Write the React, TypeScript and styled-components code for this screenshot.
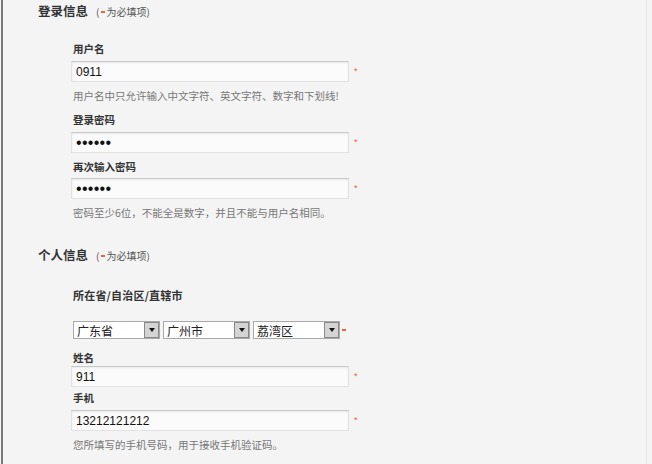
import React from "react";
import styled, { createGlobalStyle } from "styled-components";

const Global = createGlobalStyle`
  html, body { margin: 0; padding: 0; background: #f4f4f4; }
  body { font-family: "Liberation Sans", "Noto Sans CJK SC", sans-serif; color: #333; }
`;

const Page = styled.div`
  width: 646px;
  height: 464px;
  margin-left: 1px;
  border-left: 2px solid #7a7a7a;
  border-right: 1px solid #e6e6e6;
  background: #f4f4f4;
  padding-top: 2px;
  box-sizing: border-box;
  overflow: hidden;
`;

const SectionHead = styled.div<{ $mt?: number }>`
  display: flex;
  align-items: baseline;
  gap: 8px;
  padding-left: 35px;
  margin-top: ${(p) => p.$mt ?? 0}px;
  height: 18px;
  line-height: 18px;
`;

const HeadTitle = styled.span`
  font-family: "Noto Sans CJK SC", sans-serif;
  font-weight: 700;
  font-size: 12.5px;
  color: #333;
`;

const Note = styled.span`
  font-family: "Noto Sans CJK SC", sans-serif;
  font-size: 10px;
  color: #555;
  display: inline-flex;
  align-items: center;
`;

const Dash = styled.span`
  display: inline-block;
  width: 4px;
  height: 2px;
  background: #e8643c;
  margin: 0 1px 0 2px;
`;

const Body = styled.div`
  padding-left: 68px;
`;

const Label = styled.div<{ $mt?: number; $mb?: number }>`
  font-family: "Noto Sans CJK SC", sans-serif;
  font-weight: 700;
  font-size: 10.5px;
  line-height: 14px;
  color: #333;
  padding-left: 2px;
  margin-top: ${(p) => p.$mt ?? 0}px;
  margin-bottom: ${(p) => p.$mb ?? 0}px;
`;

const WideLabel = styled(Label)`
  font-size: 11px;
  letter-spacing: 0.2px;
`;

const Hint = styled.div<{ $mt?: number }>`
  font-family: "Noto Sans CJK SC", sans-serif;
  font-size: 10.5px;
  line-height: 14px;
  color: #777;
  padding-left: 2px;
  margin-top: ${(p) => p.$mt ?? 0}px;
`;

const Row = styled.div`
  display: flex;
  align-items: center;
  gap: 4px;
`;

const TextInput = styled.input<{ $pw?: boolean }>`
  width: 278px;
  height: 21px;
  box-sizing: border-box;
  border: 1px solid #e2e2e2;
  border-top-color: #c9c9c9;
  box-shadow: inset 0 1px 2px rgba(0, 0, 0, 0.08);
  background: #fbfbfb;
  padding: 0 4px;
  font-family: "Liberation Sans", Arial, sans-serif;
  font-size: ${(p) => (p.$pw ? "16px" : "12px")};
  letter-spacing: ${(p) => (p.$pw ? "0.3px" : "0")};
  color: #111;
  outline: none;
`;

const Star = styled.span`
  color: #e8643c;
  font-family: "Liberation Sans", sans-serif;
  font-size: 9px;
  line-height: 1;
  margin-left: 1px;
`;

const SelectRow = styled.div`
  display: flex;
  align-items: center;
  gap: 3px;
  padding-left: 2px;
  margin-top: 19px;
`;

const SelectBox = styled.div`
  width: 87px;
  height: 18px;
  box-sizing: border-box;
  border: 1px solid #a9a9a9;
  background: #fff;
  display: flex;
  align-items: center;
  justify-content: space-between;
  font-family: "Noto Sans CJK SC", sans-serif;
  font-size: 12px;
  color: #222;
  padding-left: 3px;
`;

const Arrow = styled.div`
  width: 15px;
  height: 16px;
  box-sizing: border-box;
  border: 1px solid #8a8a8a;
  background: #d4d4d4;
  display: flex;
  align-items: center;
  justify-content: center;
`;

const Tri = styled.span`
  width: 0;
  height: 0;
  border-left: 3.5px solid transparent;
  border-right: 3.5px solid transparent;
  border-top: 4px solid #111;
`;

const SelDash = styled.span`
  display: inline-block;
  width: 4px;
  height: 2px;
  background: #e8643c;
  margin-left: -1px;
`;

function Field({ value, pw = false }: { value: string; pw?: boolean }) {
  return (
    <Row>
      <TextInput $pw={pw} type={pw ? "password" : "text"} defaultValue={value} readOnly />
      <Star>*</Star>
    </Row>
  );
}

function Select({ text }: { text: string }) {
  return (
    <SelectBox>
      <span>{text}</span>
      <Arrow>
        <Tri />
      </Arrow>
    </SelectBox>
  );
}

function Required() {
  return (
    <Note>
      (<Dash />为必填项)
    </Note>
  );
}

export default function App() {
  return (
    <>
      <Global />
      <Page>
        <SectionHead>
          <HeadTitle>登录信息</HeadTitle>
          <Required />
        </SectionHead>
        <Body>
          <Label $mt={22} $mb={5}>用户名</Label>
          <Field value="0911" />
          <Hint $mt={7}>用户名中只允许输入中文字符、英文字符、数字和下划线!</Hint>
          <Label $mt={10} $mb={5}>登录密码</Label>
          <Field value="123456" pw />
          <Label $mt={7} $mb={4}>再次输入密码</Label>
          <Field value="123456" pw />
          <Hint $mt={7}>密码至少6位，不能全是数字，并且不能与用户名相同。</Hint>
        </Body>
        <SectionHead $mt={26}>
          <HeadTitle>个人信息</HeadTitle>
          <Required />
        </SectionHead>
        <Body>
          <WideLabel $mt={24}>所在省/自治区/直辖市</WideLabel>
          <SelectRow>
            <Select text="广东省" />
            <Select text="广州市" />
            <Select text="荔湾区" />
            <SelDash />
          </SelectRow>
          <Label $mt={12} $mb={1}>姓名</Label>
          <Field value="911" />
          <Label $mt={4} $mb={5}>手机</Label>
          <Field value="13212121212" />
          <Hint $mt={7}>您所填写的手机号码，用于接收手机验证码。</Hint>
        </Body>
      </Page>
    </>
  );
}
